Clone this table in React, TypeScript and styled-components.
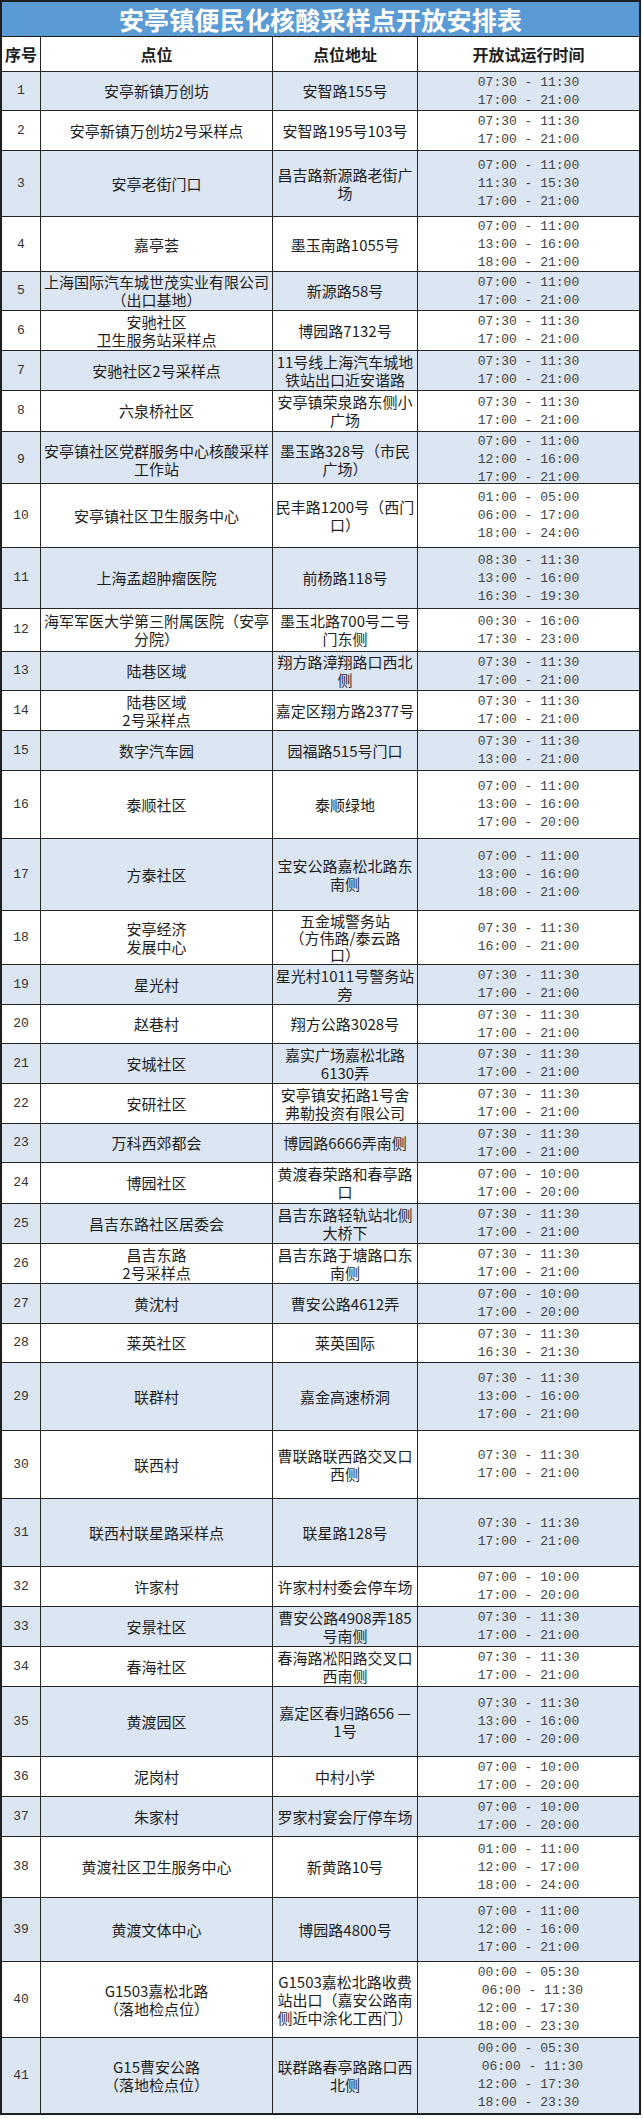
import React from "react";
import styled, { createGlobalStyle } from "styled-components";

const Global = createGlobalStyle`
  html, body { margin: 0; padding: 0; background: #ffffff; }
  body { font-family: "Noto Sans CJK SC", "Noto Sans", sans-serif; }
`;

const Page = styled.div`
  width: 644px;
  min-height: 2119px;
  background: #ffffff;
`;

const Sheet = styled.div`
  width: 641px;
  box-sizing: border-box;
  border: 2px solid #1f1f1f;
  display: flex;
  flex-direction: column;
`;

const TitleBar = styled.div`
  height: 35px;
  box-sizing: border-box;
  border-bottom: 1px solid #1f1f1f;
  background: #5b9bd5;
  color: #ffffff;
  font-family: "Noto Sans CJK SC", sans-serif;
  font-weight: 700;
  font-size: 25px;
  display: flex;
  align-items: center;
  justify-content: center;
  letter-spacing: 0.2px;
`;

const Row = styled.div<{ $h: number; $blue: boolean; $last?: boolean }>`
  display: grid;
  grid-template-columns: 39px 232px 145px 221px;
  height: ${(p) => p.$h}px;
  box-sizing: border-box;
  border-bottom: ${(p) => (p.$last ? "none" : "1px solid #262626")};
  background: ${(p) => (p.$blue ? "#dce6f2" : "#ffffff")};
`;

type Kind = "num" | "name" | "addr" | "time" | "head";

const Cell = styled.div<{ $kind: Kind; $tight?: boolean; $end?: boolean }>`
  box-sizing: border-box;
  border-right: ${(p) => (p.$kind === "time" || p.$end ? "none" : "1px solid #262626")};
  display: flex;
  flex-direction: column;
  align-items: center;
  justify-content: center;
  text-align: center;
  white-space: pre-line;
  font-family: ${(p) =>
    p.$kind === "num" || p.$kind === "time"
      ? '"Liberation Mono", "DejaVu Sans Mono", monospace'
      : '"Noto Sans CJK SC", sans-serif'};
  font-size: ${(p) =>
    p.$kind === "head" ? "16px" : p.$kind === "num" || p.$kind === "time" ? "13px" : "15px"};
  font-weight: ${(p) => (p.$kind === "head" ? 700 : 400)};
  line-height: ${(p) => (p.$tight ? "17px" : "18px")};
  color: ${(p) =>
    p.$kind === "time" ? "#444444" : p.$kind === "num" ? "#333333" : "#1e1e1e"};
  padding-top: ${(p) => (p.$kind === "time" ? "1px" : "0")};
`;

const TimeLine = styled.span`
  display: block;
  white-space: pre;
`;

type Entry = { name: string; addr: string; times: string[]; h: number };

const A = ["07:30 - 11:30", "17:00 - 21:00"];
const B = ["07:00 - 10:00", "17:00 - 20:00"];
const NIGHT = ["00:00 - 05:30", " 06:00 - 11:30", "12:00 - 17:30", "18:00 - 23:30"];

const rows: Entry[] = [
  { name: "安亭新镇万创坊", addr: "安智路155号", times: A, h: 39 },
  { name: "安亭新镇万创坊2号采样点", addr: "安智路195号103号", times: A, h: 40 },
  { name: "安亭老街门口", addr: "昌吉路新源路老街广\n场", times: ["07:00 - 11:00", "11:30 - 15:30", "17:00 - 21:00"], h: 66 },
  { name: "嘉亭荟", addr: "墨玉南路1055号", times: ["07:00 - 11:00", "13:00 - 16:00", "18:00 - 21:00"], h: 55 },
  { name: "上海国际汽车城世茂实业有限公司\n（出口基地）", addr: "新源路58号", times: ["07:00 - 11:00", "17:00 - 21:00"], h: 39 },
  { name: "安驰社区\n卫生服务站采样点", addr: "博园路7132号", times: A, h: 40 },
  { name: "安驰社区2号采样点", addr: "11号线上海汽车城地\n铁站出口近安谐路", times: A, h: 40 },
  { name: "六泉桥社区", addr: "安亭镇荣泉路东侧小\n广场", times: A, h: 41 },
  { name: "安亭镇社区党群服务中心核酸采样\n工作站", addr: "墨玉路328号（市民\n广场）", times: ["07:00 - 11:00", "12:00 - 16:00", "17:00 - 21:00"], h: 52 },
  { name: "安亭镇社区卫生服务中心", addr: "民丰路1200号（西门\n口）", times: ["01:00 - 05:00", "06:00 - 17:00", "18:00 - 24:00"], h: 64 },
  { name: "上海孟超肿瘤医院", addr: "前杨路118号", times: ["08:30 - 11:30", "13:00 - 16:00", "16:30 - 19:30"], h: 61 },
  { name: "海军军医大学第三附属医院（安亭\n分院）", addr: "墨玉北路700号二号\n门东侧", times: ["00:30 - 16:00", "17:30 - 23:00"], h: 43 },
  { name: "陆巷区域", addr: "翔方路漳翔路口西北\n侧", times: A, h: 39 },
  { name: "陆巷区域\n2号采样点", addr: "嘉定区翔方路2377号", times: A, h: 40 },
  { name: "数字汽车园", addr: "园福路515号门口", times: ["07:30 - 11:30", "13:00 - 21:00"], h: 40 },
  { name: "泰顺社区", addr: "泰顺绿地", times: ["07:00 - 11:00", "13:00 - 16:00", "17:00 - 20:00"], h: 68 },
  { name: "方泰社区", addr: "宝安公路嘉松北路东\n南侧", times: ["07:00 - 11:00", "13:00 - 16:00", "18:00 - 21:00"], h: 72 },
  { name: "安亭经济\n发展中心", addr: "五金城警务站\n（方伟路/泰云路\n口）", times: ["07:30 - 11:30", "16:00 - 21:00"], h: 54 },
  { name: "星光村", addr: "星光村1011号警务站\n旁", times: A, h: 40 },
  { name: "赵巷村", addr: "翔方公路3028号", times: A, h: 39 },
  { name: "安城社区", addr: "嘉实广场嘉松北路\n6130弄", times: A, h: 40 },
  { name: "安研社区", addr: "安亭镇安拓路1号舍\n弗勒投资有限公司", times: A, h: 40 },
  { name: "万科西郊都会", addr: "博园路6666弄南侧", times: A, h: 39 },
  { name: "博园社区", addr: "黄渡春荣路和春亭路\n口", times: ["07:00 - 10:00", "17:00 - 20:00"], h: 41 },
  { name: "昌吉东路社区居委会", addr: "昌吉东路轻轨站北侧\n大桥下", times: A, h: 40 },
  { name: "昌吉东路\n2号采样点", addr: "昌吉东路于塘路口东\n南侧", times: A, h: 40 },
  { name: "黄沈村", addr: "曹安公路4612弄", times: B, h: 40 },
  { name: "莱英社区", addr: "莱英国际", times: ["07:30 - 11:30", "16:30 - 21:30"], h: 39 },
  { name: "联群村", addr: "嘉金高速桥洞", times: ["07:30 - 11:30", "13:00 - 16:00", "17:00 - 21:00"], h: 68 },
  { name: "联西村", addr: "曹联路联西路交叉口\n西侧", times: A, h: 68 },
  { name: "联西村联星路采样点", addr: "联星路128号", times: A, h: 68 },
  { name: "许家村", addr: "许家村村委会停车场", times: B, h: 40 },
  { name: "安景社区", addr: "曹安公路4908弄185\n号南侧", times: A, h: 40 },
  { name: "春海社区", addr: "春海路凇阳路交叉口\n西南侧", times: A, h: 40 },
  { name: "黄渡园区", addr: "嘉定区春归路656 —\n1号", times: ["07:30 - 11:30", "13:00 - 16:00", "17:00 - 20:00"], h: 70 },
  { name: "泥岗村", addr: "中村小学", times: B, h: 40 },
  { name: "朱家村", addr: "罗家村宴会厅停车场", times: B, h: 40 },
  { name: "黄渡社区卫生服务中心", addr: "新黄路10号", times: ["01:00 - 11:00", "12:00 - 17:00", "18:00 - 24:00"], h: 61 },
  { name: "黄渡文体中心", addr: "博园路4800号", times: ["07:00 - 11:00", "12:00 - 16:00", "17:00 - 21:00"], h: 64 },
  { name: "G1503嘉松北路\n（落地检点位）", addr: "G1503嘉松北路收费\n站出口（嘉安公路南\n侧近中涂化工西门）", times: NIGHT, h: 76 },
  { name: "G15曹安公路\n（落地检点位）", addr: "联群路春亭路路口西\n北侧", times: NIGHT, h: 75 },
];

const lineCount = (s: string) => s.split("\n").length;

export default function App() {
  return (
    <Page>
      <Global />
      <Sheet>
        <TitleBar>安亭镇便民化核酸采样点开放安排表</TitleBar>
        <Row $h={35} $blue={false}>
          <Cell $kind="head">序号</Cell>
          <Cell $kind="head">点位</Cell>
          <Cell $kind="head">点位地址</Cell>
          <Cell $kind="head" $end>开放试运行时间</Cell>
        </Row>
        {rows.map((r, i) => (
          <Row key={i} $h={r.h} $blue={i % 2 === 0} $last={i === rows.length - 1}>
            <Cell $kind="num">{i + 1}</Cell>
            <Cell $kind="name" $tight={lineCount(r.name) * 18 > r.h - 2}>{r.name}</Cell>
            <Cell $kind="addr" $tight={lineCount(r.addr) * 18 > r.h - 2}>{r.addr}</Cell>
            <Cell $kind="time">
              {r.times.map((t, j) => (
                <TimeLine key={j}>{t}</TimeLine>
              ))}
            </Cell>
          </Row>
        ))}
      </Sheet>
    </Page>
  );
}
